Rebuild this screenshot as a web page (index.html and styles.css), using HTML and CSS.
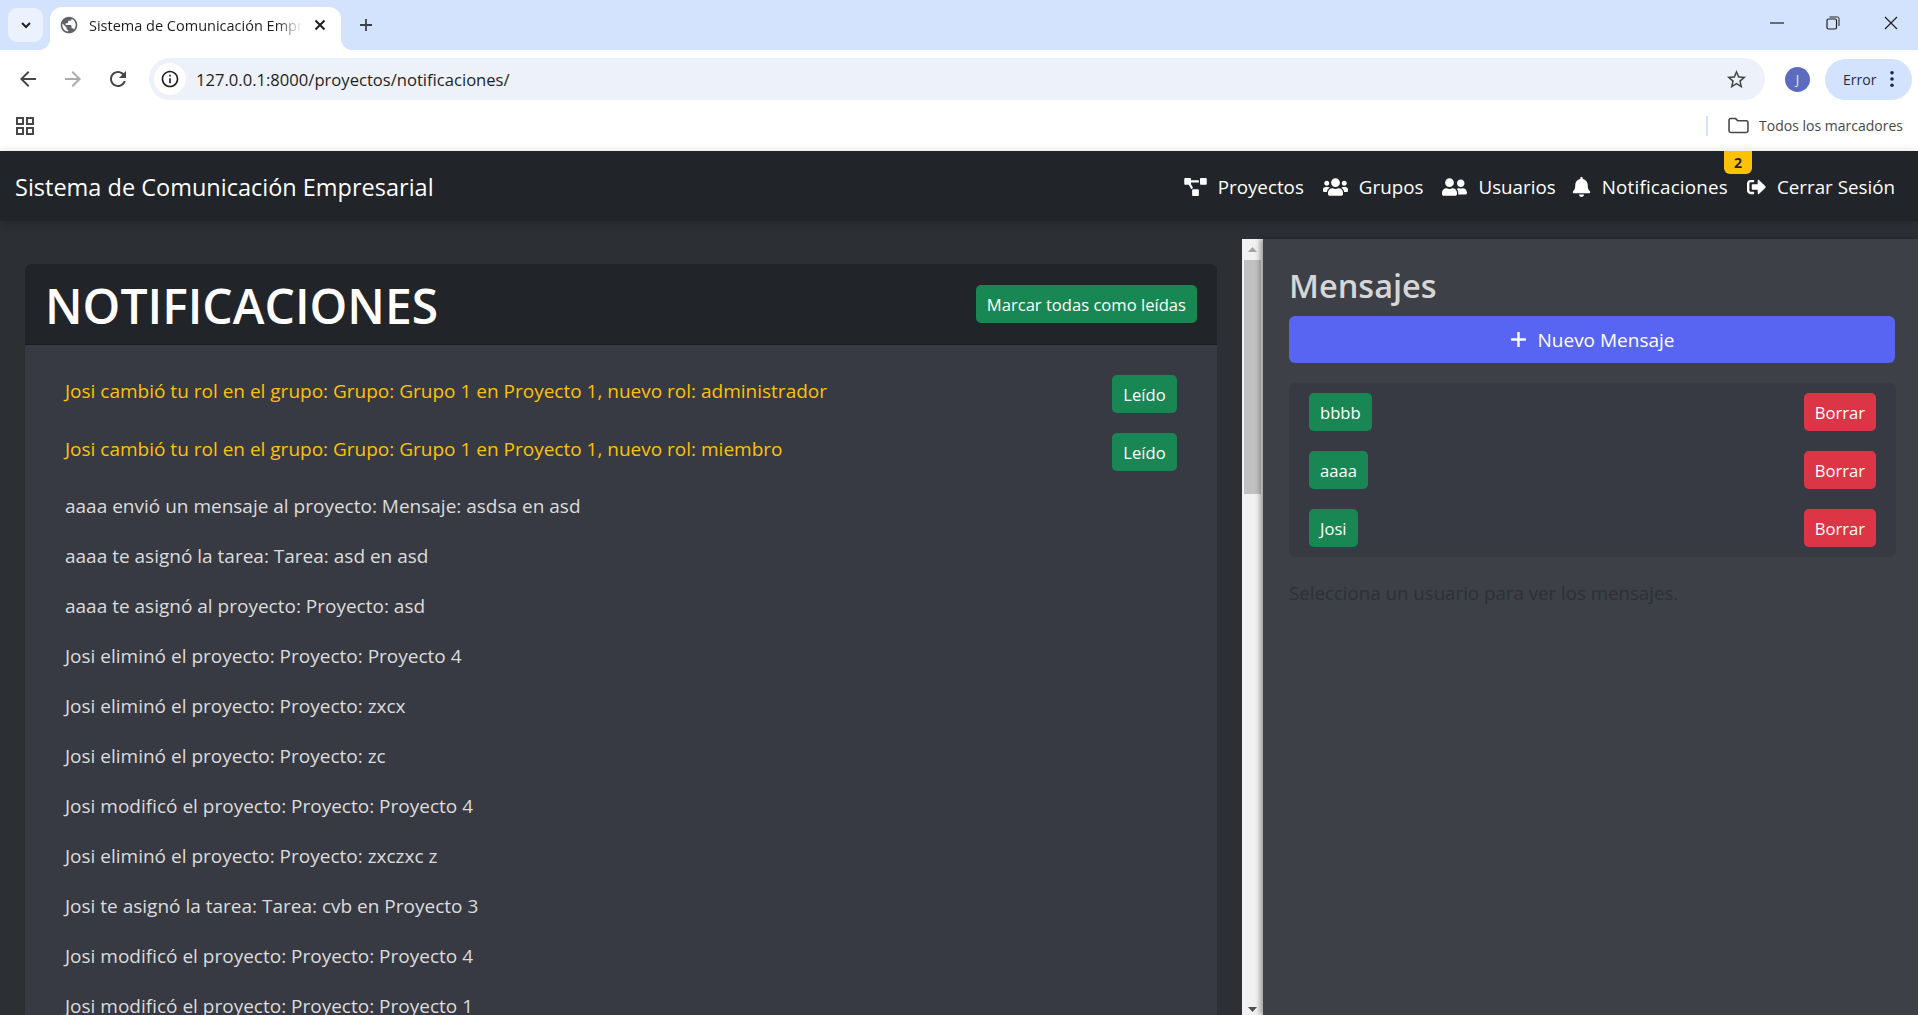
FILE: index.html
```html
<!DOCTYPE html>
<html lang="es">
<head>
<meta charset="utf-8">
<title>Sistema de Comunicación Empresarial</title>
<link rel="stylesheet" href="styles.css">
</head>
<body>
<header class="browser">
  <div class="tabstrip">
    <div class="tabsearch"><svg class="i16" viewBox="0 0 16 16"><path d="M4 6l4 4 4-4" fill="none" stroke="#1f1f1f" stroke-width="2"/></svg></div>
    <div class="tab">
      <svg class="i20" viewBox="0 0 24 24"><path fill="#5f6368" d="M12 2C6.48 2 2 6.48 2 12s4.48 10 10 10 10-4.48 10-10S17.52 2 12 2zm-1 17.93c-3.95-.49-7-3.85-7-7.93 0-.62.08-1.21.21-1.79L9 15v1c0 1.1.9 2 2 2v1.93zm6.9-2.54c-.26-.81-1-1.39-1.9-1.39h-1v-3c0-.55-.45-1-1-1H8v-2h2c.55 0 1-.45 1-1V7h2c1.1 0 2-.9 2-2v-.41c2.93 1.19 5 4.06 5 7.41 0 2.08-.8 3.97-2.1 5.39z"/></svg>
      <span class="tabtitle">Sistema de Comunicación Empresarial</span>
      <svg class="i16" viewBox="0 0 16 16"><path d="M3.5 3.5l9 9M12.5 3.5l-9 9" stroke="#1f1f1f" stroke-width="2"/></svg>
    </div>
    <svg class="newtab" viewBox="0 0 16 16"><path d="M8 2v12M2 8h12" stroke="#3c4043" stroke-width="1.8"/></svg>
    <div class="winctl">
      <svg class="i14" viewBox="0 0 14 14"><path d="M0 7h14" stroke="#1f1f1f" stroke-width="1.2"/></svg>
      <svg class="i14" viewBox="0 0 14 14"><rect x="1" y="3" width="9.5" height="10" rx="1.5" fill="none" stroke="#1f1f1f" stroke-width="1.2"/><path d="M3.5 1h8a1.5 1.5 0 0 1 1.5 1.5V10" fill="none" stroke="#1f1f1f" stroke-width="1"/></svg>
      <svg class="i14" viewBox="0 0 14 14"><path d="M1 1l12 12M13 1L1 13" stroke="#1f1f1f" stroke-width="1.2"/></svg>
    </div>
  </div>
  <div class="toolbar">
    <svg class="navicon" viewBox="0 0 24 24"><path fill="#474747" d="M20 11H7.83l5.59-5.59L12 4l-8 8 8 8 1.41-1.41L7.83 13H20v-2z"/></svg>
    <svg class="navicon" viewBox="0 0 24 24"><path fill="#ababab" d="M12 4l-1.41 1.41L16.17 11H4v2h12.17l-5.58 5.59L12 20l8-8z"/></svg>
    <svg class="navicon" viewBox="0 0 24 24"><path fill="#474747" d="M17.65 6.35C16.2 4.9 14.21 4 12 4c-4.42 0-7.99 3.58-7.99 8s3.57 8 7.99 8c3.73 0 6.84-2.55 7.73-6h-2.08c-.82 2.33-3.04 4-5.65 4-3.31 0-6-2.69-6-6s2.69-6 6-6c1.66 0 3.14.69 4.22 1.78L13 11h7V4l-2.35 2.35z"/></svg>
    <div class="omnibox">
      <span class="infochip"><svg class="i20" viewBox="0 0 24 24"><path fill="#1f1f1f" d="M11 7h2v2h-2zm0 4h2v6h-2zm1-9C6.48 2 2 6.48 2 12s4.48 10 10 10 10-4.48 10-10S17.52 2 12 2zm0 18c-4.41 0-8-3.59-8-8s3.59-8 8-8 8 3.59 8 8-3.59 8-8 8z"/></svg></span>
      <span class="url">127.0.0.1:8000/proyectos/notificaciones/</span>
      <svg class="star" viewBox="0 0 24 24"><path fill="#474747" d="M22 9.24l-7.19-.62L12 2 9.19 8.63 2 9.24l5.46 4.73L5.82 21 12 17.27 18.18 21l-1.63-7.03L22 9.24zM12 15.4l-3.76 2.27 1-4.28-3.32-2.88 4.38-.38L12 6.1l1.71 4.04 4.38.38-3.32 2.88 1 4.28L12 15.4z"/></svg>
    </div>
    <span class="avatar">J</span>
    <div class="errorpill"><span>Error</span><svg class="dots" viewBox="0 0 6 20"><circle cx="3" cy="3" r="2"/><circle cx="3" cy="10" r="2"/><circle cx="3" cy="17" r="2"/></svg></div>
  </div>
  <div class="bookmarks">
    <svg class="i20" viewBox="0 0 20 20"><g fill="none" stroke="#474747" stroke-width="2"><rect x="2" y="2" width="6" height="6"/><rect x="12" y="2" width="6" height="6"/><rect x="2" y="12" width="6" height="6"/><rect x="12" y="12" width="6" height="6"/></g></svg>
    <div class="bm-right">
      <span class="bm-sep"></span>
      <svg class="bm-folder" viewBox="0 0 20 16"><path d="M1 3a1.6 1.6 0 0 1 1.6-1.6h4.6l2 2H17.400a1.6 1.600 0 0 1 1.600 1.600V13a1.600 1.600 0 0 1-1.600 1.600H2.600A1.600 1.600 0 0 1 1 13z" fill="none" stroke="#474747" stroke-width="1.500"/></svg>
      <span class="bm-label">Todos los marcadores</span>
    </div>
  </div>
</header>

<nav class="navbar">
  <a class="brand">Sistema de Comunicación Empresarial</a>
  <ul class="navlinks">
    <li class="navlink"><svg class="fa fa-p" viewBox="0 0 640 512"><path d="M384 320H256c-17.67 0-32 14.33-32 32v128c0 17.67 14.33 32 32 32h128c17.67 0 32-14.33 32-32V352c0-17.67-14.33-32-32-32zM192 32c0-17.67-14.33-32-32-32H32C14.33 0 0 14.33 0 32v128c0 17.67 14.33 32 32 32h95.72l73.16 128.04C211.98 300.98 232.4 288 256 288h.28L192 175.51V128h224V64H192V32zM608 0H480c-17.67 0-32 14.33-32 32v128c0 17.67 14.33 32 32 32h128c17.67 0 32-14.33 32-32V32c0-17.67-14.33-32-32-32z"/></svg>Proyectos</li>
    <li class="navlink"><svg class="fa fa-w" viewBox="0 0 640 512"><path d="M96 224c35.3 0 64-28.7 64-64s-28.7-64-64-64-64 28.7-64 64 28.7 64 64 64zm448 0c35.3 0 64-28.7 64-64s-28.7-64-64-64-64 28.7-64 64 28.7 64 64 64zm32 32h-64c-17.6 0-33.5 7.1-45.1 18.6 40.3 22.1 68.9 62 75.1 109.4h66c17.7 0 32-14.3 32-32v-32c0-35.3-28.7-64-64-64zm-256 0c61.9 0 112-50.1 112-112S381.9 32 320 32 208 82.1 208 144s50.1 112 112 112zm76.8 32h-8.3c-20.8 10-43.9 16-68.5 16s-47.6-6-68.5-16h-8.3C179.6 288 128 339.6 128 403.2V432c0 26.5 21.5 48 48 48h288c26.5 0 48-21.5 48-48v-28.8c0-63.6-51.6-115.2-115.2-115.2zm-223.7-13.4C161.5 263.1 145.6 256 128 256H64c-35.3 0-64 28.7-64 64v32c0 17.7 14.3 32 32 32h65.9c6.3-47.4 34.9-87.3 75.2-109.4z"/></svg>Grupos</li>
    <li class="navlink"><svg class="fa fa-w" viewBox="0 0 640 512"><path d="M192 256c61.9 0 112-50.1 112-112S253.9 32 192 32 80 82.1 80 144s50.1 112 112 112zm76.8 32h-8.3c-20.8 10-43.9 16-68.5 16s-47.6-6-68.5-16h-8.3C51.6 288 0 339.6 0 403.2V432c0 26.5 21.5 48 48 48h288c26.5 0 48-21.5 48-48v-28.8c0-63.6-51.6-115.2-115.2-115.2zM480 256c53 0 96-43 96-96s-43-96-96-96-96 43-96 96 43 96 96 96zm48 32h-3.8c-13.9 4.8-28.6 8-44.2 8s-30.3-3.2-44.2-8H432c-20.4 0-39.2 5.9-55.7 15.4 24.4 26.3 39.7 61.2 39.7 99.800v38.400c0 2.200-.5 4.300-.6 6.400H592c26.500 0 48-21.500 48-48 0-61.900-50.100-112-112-112z"/></svg>Usuarios</li>
    <li class="navlink notif"><svg class="fa fa-n" viewBox="0 0 448 512"><path d="M224 512c35.32 0 63.97-28.65 63.97-64H160.03c0 35.35 28.65 64 63.97 64zm215.39-149.71c-19.32-20.76-55.47-51.99-55.47-154.29 0-77.7-54.48-139.9-127.94-155.16V32c0-17.67-14.32-32-31.98-32s-31.98 14.33-31.98 32v20.84C118.56 68.1 64.08 130.3 64.08 208c0 102.3-36.15 133.53-55.47 154.29-6 6.45-8.66 14.16-8.61 21.71.11 16.4 12.98 32 32.1 32h383.8c19.12 0 32-15.6 32.1-32 .05-7.55-2.61-15.27-8.61-21.71z"/></svg>Notificaciones<span class="badge">2</span></li>
    <li class="navlink"><svg class="fa fa-n" viewBox="0 0 512 512"><path d="M497 273L329 441c-15 15-41 4.5-41-17v-96H152c-13.3 0-24-10.7-24-24v-96c0-13.3 10.7-24 24-24h136V88c0-21.4 25.9-32 41-17l168 168c9.3 9.4 9.3 24.6 0 34zM192 436v-40c0-6.6-5.4-12-12-12H96c-17.7 0-32-14.3-32-32V160c0-17.7 14.3-32 32-32h84c6.6 0 12-5.4 12-12V76c0-6.6-5.4-12-12-12H96c-53 0-96 43-96 96v192c0 53 43 96 96 96h84c6.6 0 12-5.4 12-12z"/></svg>Cerrar Sesión</li>
  </ul>
</nav>

<main class="workspace">
  <section class="leftpane">
    <div class="leftscroll">
      <div class="card">
        <div class="cardhead">
          <h1>NOTIFICACIONES</h1>
          <button class="btn green">Marcar todas como leídas</button>
        </div>
        <div class="cardbody">
          <div class="row"><p class="item unread">Josi cambió tu rol en el grupo: Grupo: Grupo 1 en Proyecto 1, nuevo rol: administrador</p><button class="btn green">Leído</button></div>
          <div class="row"><p class="item unread">Josi cambió tu rol en el grupo: Grupo: Grupo 1 en Proyecto 1, nuevo rol: miembro</p><button class="btn green">Leído</button></div>
          <p class="item">aaaa envió un mensaje al proyecto: Mensaje: asdsa en asd</p>
          <p class="item">aaaa te asignó la tarea: Tarea: asd en asd</p>
          <p class="item">aaaa te asignó al proyecto: Proyecto: asd</p>
          <p class="item">Josi eliminó el proyecto: Proyecto: Proyecto 4</p>
          <p class="item">Josi eliminó el proyecto: Proyecto: zxcx</p>
          <p class="item">Josi eliminó el proyecto: Proyecto: zc</p>
          <p class="item">Josi modificó el proyecto: Proyecto: Proyecto 4</p>
          <p class="item">Josi eliminó el proyecto: Proyecto: zxczxc z</p>
          <p class="item">Josi te asignó la tarea: Tarea: cvb en Proyecto 3</p>
          <p class="item">Josi modificó el proyecto: Proyecto: Proyecto 4</p>
          <p class="item">Josi modificó el proyecto: Proyecto: Proyecto 1</p>
        </div>
      </div>
    </div>
    <div class="scrollbar">
      <svg class="sbarrow" viewBox="0 0 9 5"><path d="M0 5l4.500-5 4.500 5z" fill="#a3a3a3"/></svg>
      <div class="sbthumb"></div>
      <div class="sbtrack"></div>
      <svg class="sbarrow" viewBox="0 0 9 5"><path d="M0 0l4.500 5 4.500-5z" fill="#505050"/></svg>
    </div>
  </section>
  <aside class="rightpane">
    <h2>Mensajes</h2>
    <button class="newmsg"><svg class="plus" viewBox="0 0 16 16"><path d="M8 1v14M1 8h14" stroke="#fff" stroke-width="2.200"/></svg>Nuevo Mensaje</button>
    <div class="users">
      <div class="userrow"><button class="btn green">bbbb</button><button class="btn red">Borrar</button></div>
      <div class="userrow"><button class="btn green">aaaa</button><button class="btn red">Borrar</button></div>
      <div class="userrow"><button class="btn green">Josi</button><button class="btn red">Borrar</button></div>
    </div>
    <p class="hint">Selecciona un usuario para ver los mensajes.</p>
  </aside>
</main>
</body>
</html>
```
FILE: styles.css
```css
* { box-sizing: border-box; }
html, body { margin: 0; height: 1015px; overflow: hidden; }
body { font-family: "Open Sans", "Noto Sans", sans-serif; background: #2c2f34; display: flex; flex-direction: column; }
p, h1, h2, ul { margin: 0; padding: 0; }
svg { display: block; flex: none; }
.i14 { width: 14px; height: 14px; }
.i16 { width: 16px; height: 16px; }
.i20 { width: 20px; height: 20px; }

/* browser chrome */
.browser { background: #fff; flex: none; }
.tabstrip { height: 50px; background: #d3e3fd; display: flex; align-items: flex-start; }
.tabsearch { width: 35px; height: 34px; margin: 8px 7px 0 8px; background: #ebf1fd; border-radius: 9px; display: flex; align-items: center; justify-content: center; }
.tab { position: relative; width: 291px; height: 43px; margin-top: 7px; background: #fff; border-radius: 12px 12px 0 0; display: flex; align-items: center; padding: 0 13px 7px 9px; gap: 10px; }
.tab::before, .tab::after { content: ""; position: absolute; bottom: 0; width: 12px; height: 12px; }
.tab::before { left: -12px; background: radial-gradient(circle at 0 0, transparent 12px, #fff 12.5px); }
.tab::after { right: -12px; background: radial-gradient(circle at 100% 0, transparent 12px, #fff 12.5px); }
.tabtitle { flex: 1; font-size: 14.5px; color: #1f1f1f; white-space: nowrap; overflow: hidden; -webkit-mask-image: linear-gradient(90deg, #000 88%, transparent); mask-image: linear-gradient(90deg, #000 88%, transparent); }
.newtab { width: 16px; height: 16px; margin: 17px 0 0 17px; }
.winctl { margin-left: auto; display: flex; gap: 41px; padding: 16px 20px 0 0; }
.winctl svg:nth-child(2) { margin-right: 3px; }
.winctl svg:first-child { margin-right: 1px; }
.toolbar { height: 50px; background: #fff; border-radius: 12px 12px 0 0; margin-top: 0; display: flex; align-items: center; padding: 8px 6px 0 16px; position: relative; }
.navicon { width: 24px; height: 24px; margin-right: 21px; }
.omnibox { width: 1616px; height: 42px; margin-left: -2px; background: #ecf1fa; border-radius: 21px; display: flex; align-items: center; padding: 0 17px 0 5px; flex: none; }
.infochip { width: 32px; height: 32px; border-radius: 50%; background: #fff; display: flex; align-items: center; justify-content: center; }
.url { font-size: 16.6px; color: #1f1f1f; margin-left: 10px; flex: 1; }
.star { width: 23px; height: 23px; }
.avatar { width: 25px; height: 25px; margin-left: 20px; border-radius: 50%; background: #5c6bc0; color: #e8eaf6; font-size: 13px; display: flex; align-items: center; justify-content: center; flex: none; }
.errorpill { width: 87px; height: 41px; margin-left: 15px; border-radius: 21px; background: #d3e3fd; display: flex; align-items: center; justify-content: space-between; padding: 0 17px 0 18px; font-size: 14px; color: #1d2b44; flex: none; }
.dots { width: 6px; height: 18px; fill: #0f2a5a; }
.bookmarks { height: 51px; background: #fff; display: flex; align-items: center; justify-content: space-between; padding: 0 15px; }
.bm-right { display: flex; align-items: center; }
.bm-sep { width: 2px; height: 20px; background: #d3e3fd; margin-right: 20px; }
.bm-folder { width: 21px; height: 17px; margin-right: 10px; }
.bm-label { font-size: 14px; color: #474747; }

/* navbar */
.navbar { flex: none; height: 70px; background: #212529; display: flex; align-items: center; justify-content: space-between; padding: 1px 23px 0 15px; position: relative; z-index: 2; box-shadow: 0 2px 10px rgba(0,0,0,.2); }
.brand { font-size: 23.5px; color: #fff; }
.navlinks { list-style: none; display: flex; gap: 19px; }
.navlink { display: flex; align-items: center; gap: 11px; font-size: 18.8px; color: #fff; position: relative; }
.notif { letter-spacing: .2px; margin-left: -3px; }
.fa { fill: #fff; height: 20px; }
.fa-p { width: 23px; height: 18px; }
.fa-w { width: 25px; }
.fa-n { width: 19px; }
.badge { position: absolute; top: -23px; right: -24px; width: 28px; height: 23px; background: #ffc107; border-radius: 0 0 6px 6px; color: #212529; font-size: 14px; font-weight: 700; letter-spacing: 0; display: flex; align-items: center; justify-content: center; }

/* workspace */
.workspace { flex: 1; min-height: 0; display: flex; padding-top: 18px; }
.leftpane { width: 1263px; flex: none; display: flex; margin-top: -18px; }
.leftscroll { flex: 1; min-width: 0; overflow: hidden; padding: 43px 25px 0; background: #2c2f34; }
.card { border-radius: 6px 6px 0 0; overflow: hidden; background: #373a42; }
.cardhead { height: 81px; background: #212429; border-bottom: 1px solid #1a1c20; display: flex; align-items: center; justify-content: space-between; padding: 0 20px 0 20px; }
h1 { font-size: 48px; font-weight: 600; color: #fff; padding-top: 2px; }
.cardbody { padding: 30px 40px 0; }
.row { display: flex; justify-content: space-between; align-items: flex-start; margin-bottom: 20px; }
.item { font-size: 19px; line-height: 30px; color: #dcdcdc; margin-bottom: 20px; }
.row .item { margin: 1px 0 0; }
.row + .item { margin-top: 1px; }
.unread { color: #ffc107; }
.btn { height: 38px; border: 0; border-radius: 5px; padding: 0 11px; font: 16.6px "Open Sans", "Noto Sans", sans-serif; color: #fff; }
.row .btn { width: 65px; padding: 0; }
.green { background: #198754; }
.red { background: #dc3545; }

.scrollbar { width: 21px; flex: none; background: #f1f1f1; margin-top: 18px; display: flex; flex-direction: column; align-items: center; padding: 8px 2px 3px; }
.sbarrow { width: 9px; height: 5px; }
.sbthumb { width: 17px; height: 234px; background: #c1c1c1; margin-top: 8px; }
.sbtrack { flex: 1; }

.rightpane { flex: 1; min-width: 0; background: #3d4046; padding: 0 22px 0 26px; box-shadow: -3px 0 5px rgba(0,0,0,.35); position: relative; z-index: 1; }
h2 { font-size: 32.5px; font-weight: 600; color: #d6d6d6; margin-top: 24px; line-height: 46px; }
.newmsg { display: flex; align-items: center; justify-content: center; gap: 11px; width: 606px; height: 47px; margin: 7px 0 0; border: 0; border-radius: 6px; background: #5865f2; color: #fff; font: 19px "Open Sans", "Noto Sans", sans-serif; }
.plus { width: 17px; height: 17px; }
.users { width: 607px; margin: 20px 0 0; height: 174px; padding: 10px 20px; border-radius: 6px; background: #373a42; display: flex; flex-direction: column; gap: 20px; }
.userrow { display: flex; justify-content: space-between; }
.hint { font-size: 18.7px; color: #2d3036; margin: 21px 0 0; line-height: 30px; }
```
